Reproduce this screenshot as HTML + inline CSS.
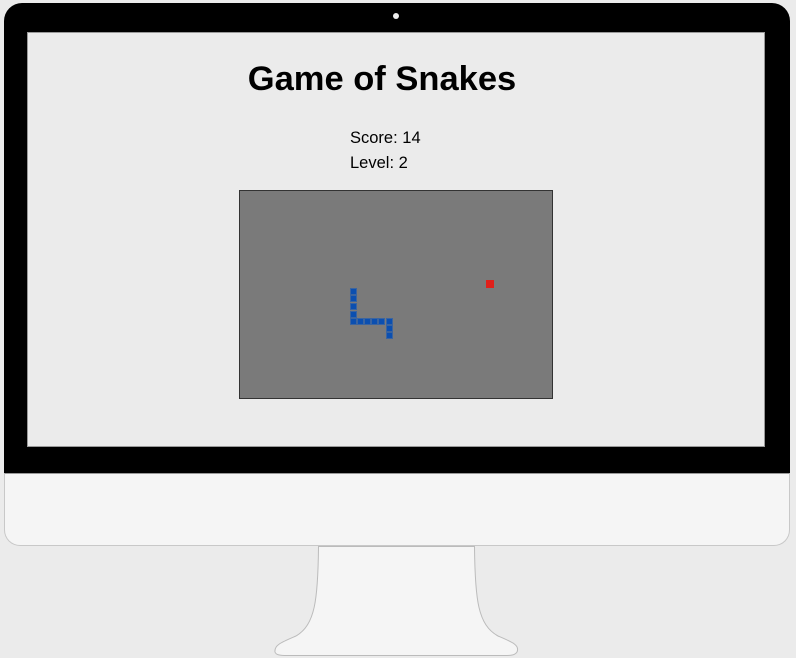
<!DOCTYPE html>
<html><head><style>
body{margin:0;width:796px;height:658px;background:#ebebeb;position:relative;overflow:hidden;font-family:"Liberation Sans",Arial,sans-serif}
.mon{position:absolute;left:4px;top:3px;width:786px;height:471px;background:#000;border-radius:18px 18px 0 0}
.cam{position:absolute;left:393px;top:13px;width:6px;height:6px;border-radius:50%;background:#eee}
.scr{position:absolute;left:27px;top:32px;width:736px;height:413px;background:#ebebeb;border:1px solid #999}
.chin{position:absolute;left:4px;top:473px;width:784px;height:71px;background:#f5f5f5;border:1px solid #c8c8c8;border-top:1px solid #999;border-radius:0 0 16px 16px}
h1{position:absolute;left:0;width:764px;top:60px;margin:0;text-align:center;font-size:34.5px;font-weight:bold;color:#000}
.t{position:absolute;left:350px;font-size:16.5px;color:#000}
.board{position:absolute;left:239px;top:190px;width:312px;height:207px;background:#7a7a7a;border:1px solid #333}
.s{position:absolute;box-sizing:border-box;width:7px;height:7px;background:#0b4fb0;border:1px solid #3a64a0}
</style></head><body>
<div class="mon"></div><div class="cam"></div>
<div class="scr"></div>
<h1>Game of Snakes</h1>
<div class="t" style="top:129px">Score: 14</div>
<div class="t" style="top:154px">Level: 2</div>
<div class="board">
<div class="s" style="left:110px;top:97px"></div>
<div class="s" style="left:110px;top:104px"></div>
<div class="s" style="left:110px;top:112px"></div>
<div class="s" style="left:110px;top:120px"></div>
<div class="s" style="left:110px;top:127px"></div>
<div class="s" style="left:117px;top:127px"></div>
<div class="s" style="left:124px;top:127px"></div>
<div class="s" style="left:131px;top:127px"></div>
<div class="s" style="left:138px;top:127px"></div>
<div class="s" style="left:146px;top:127px"></div>
<div class="s" style="left:146px;top:134px"></div>
<div class="s" style="left:146px;top:141px"></div>
<div style="position:absolute;left:246px;top:89px;width:8px;height:8px;background:#e0201a"></div>
</div>
<div class="chin"></div>
<svg style="position:absolute;left:0;top:0" width="796" height="658">
<path d="M318.5 546.5 L474.5 546.5 C475 600 478 625 498 636 C512 642 520 645 517 652 C515 655 512 655.5 505 655.5 L287 655.5 C280 655.5 276 655 275 652 C274 645 282 642 296 636 C315 625 318 600 318.5 546.5 Z" fill="#f5f5f5" stroke="#bbb" stroke-width="1"/>
</svg>
</body></html>
